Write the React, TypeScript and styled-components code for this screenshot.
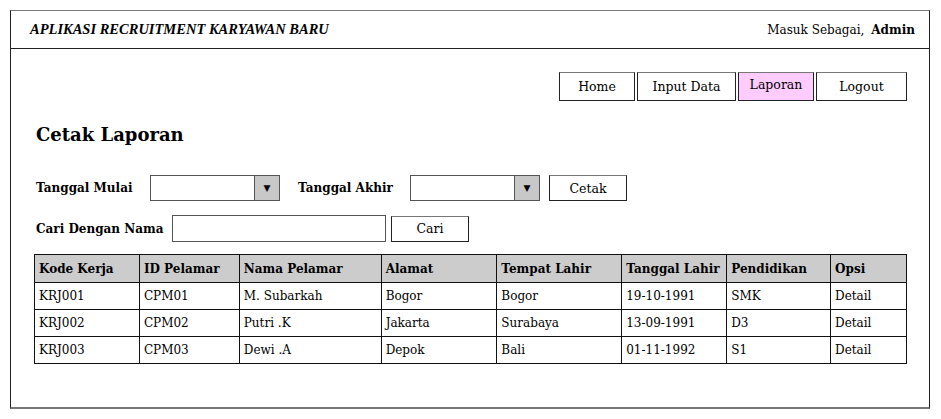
import React from "react";
import styled, { createGlobalStyle } from "styled-components";

const Global = createGlobalStyle`
  html, body { margin: 0; padding: 0; background: #fff; }
  body { font-family: "DejaVu Serif", serif; color: #000; }
`;

const Frame = styled.div`
  box-sizing: border-box;
  margin: 10px 0 0 10px;
  width: 920px;
  height: 399px;
  border: 1px solid #222;
  border-top-color: #777;
  border-bottom: 2px solid #777;
  display: flex;
  flex-direction: column;
`;

const Header = styled.header`
  box-sizing: border-box;
  height: 38px;
  border-bottom: 1px solid #222;
  display: flex;
  align-items: center;
  justify-content: space-between;
  padding: 0 14px 0 19px;
`;

const AppTitle = styled.h1`
  margin: 0;
  font-family: "Liberation Serif", serif;
  font-style: italic;
  font-weight: bold;
  font-size: 14.5px;
`;

const UserInfo = styled.div`
  font-size: 12px;
  b { margin-left: 7px; }
`;

const Body = styled.main`
  padding: 23px 22px 0 23px;
  display: flex;
  flex-direction: column;
`;

const Nav = styled.nav`
  display: flex;
  justify-content: flex-end;
  gap: 2px;
`;

const NavButton = styled.div<{ $active?: boolean; $w: number }>`
  box-sizing: border-box;
  width: ${(p) => p.$w}px;
  height: 29px;
  border: 1px solid #222;
  border-top-color: #777;
  background: ${(p) => (p.$active ? "#ffccff" : "#fff")};
  font-size: 12.5px;
  display: flex;
  align-items: center;
  justify-content: center;
  padding-bottom: ${(p) => (p.$active ? "4px" : "0")};
`;

const PageTitle = styled.h2`
  margin: 21px 0 0 2px;
  font-size: 18px;
  font-weight: bold;
  line-height: 26px;
`;

const FormRow = styled.div<{ $mt: number }>`
  display: flex;
  align-items: center;
  margin-top: ${(p) => p.$mt}px;
  margin-left: 2px;
`;

const Label = styled.span<{ $w: number; $ml?: number }>`
  font-size: 12px;
  font-weight: bold;
  width: ${(p) => p.$w}px;
  margin-left: ${(p) => p.$ml ?? 0}px;
  flex-shrink: 0;
  white-space: nowrap;
`;

const Select = styled.div`
  box-sizing: border-box;
  width: 130px;
  height: 26px;
  border: 1px solid #555;
  display: flex;
  justify-content: flex-end;
`;

const Arrow = styled.div`
  width: 24px;
  background: #c8c8c8;
  border-left: 1px solid #555;
  display: flex;
  align-items: center;
  justify-content: center;
  font-size: 9px;
`;

const TextInput = styled.div`
  box-sizing: border-box;
  width: 214px;
  height: 27px;
  border: 1px solid #555;
`;

const Button = styled.div<{ $ml: number }>`
  box-sizing: border-box;
  width: 78px;
  height: 26px;
  margin-left: ${(p) => p.$ml}px;
  border: 1px solid #222;
  border-top-color: #777;
  font-size: 12.5px;
  display: flex;
  align-items: center;
  justify-content: center;
`;

const Table = styled.table`
  margin-top: 12px;
  border-collapse: collapse;
  width: 873px;
  font-size: 12px;
  th, td {
    border: 1px solid #111;
    text-align: left;
    padding: 0 0 0 4px;
    white-space: nowrap;
  }
  th {
    background: #cccccc;
    height: 27px;
    font-weight: bold;
  }
  td { height: 26px; }
`;

const cols = [105, 100, 142, 116, 125, 105, 104, 76];
const heads = ["Kode Kerja", "ID Pelamar", "Nama Pelamar", "Alamat", "Tempat Lahir", "Tanggal Lahir", "Pendidikan", "Opsi"];
const rows = [
  ["KRJ001", "CPM01", "M. Subarkah", "Bogor", "Bogor", "19-10-1991", "SMK", "Detail"],
  ["KRJ002", "CPM02", "Putri .K", "Jakarta", "Surabaya", "13-09-1991", "D3", "Detail"],
  ["KRJ003", "CPM03", "Dewi .A", "Depok", "Bali", "01-11-1992", "S1", "Detail"],
];

export default function App() {
  return (
    <>
      <Global />
      <Frame>
        <Header>
          <AppTitle>APLIKASI RECRUITMENT KARYAWAN BARU</AppTitle>
          <UserInfo>
            Masuk Sebagai,<b>Admin</b>
          </UserInfo>
        </Header>
        <Body>
          <Nav>
            <NavButton $w={76}>Home</NavButton>
            <NavButton $w={99}>Input Data</NavButton>
            <NavButton $w={76} $active>Laporan</NavButton>
            <NavButton $w={91}>Logout</NavButton>
          </Nav>
          <PageTitle>Cetak Laporan</PageTitle>
          <FormRow $mt={27}>
            <Label $w={114}>Tanggal Mulai</Label>
            <Select>
              <Arrow>▼</Arrow>
            </Select>
            <Label $w={112} $ml={18}>Tanggal Akhir</Label>
            <Select>
              <Arrow>▼</Arrow>
            </Select>
            <Button $ml={9}>Cetak</Button>
          </FormRow>
          <FormRow $mt={14}>
            <Label $w={136}>Cari Dengan Nama</Label>
            <TextInput />
            <Button $ml={5}>Cari</Button>
          </FormRow>
          <Table>
            <colgroup>
              {cols.map((w, i) => (
                <col key={i} style={{ width: w }} />
              ))}
            </colgroup>
            <thead>
              <tr>
                {heads.map((h) => (
                  <th key={h}>{h}</th>
                ))}
              </tr>
            </thead>
            <tbody>
              {rows.map((r) => (
                <tr key={r[0]}>
                  {r.map((c, i) => (
                    <td key={i}>{c}</td>
                  ))}
                </tr>
              ))}
            </tbody>
          </Table>
        </Body>
      </Frame>
    </>
  );
}
